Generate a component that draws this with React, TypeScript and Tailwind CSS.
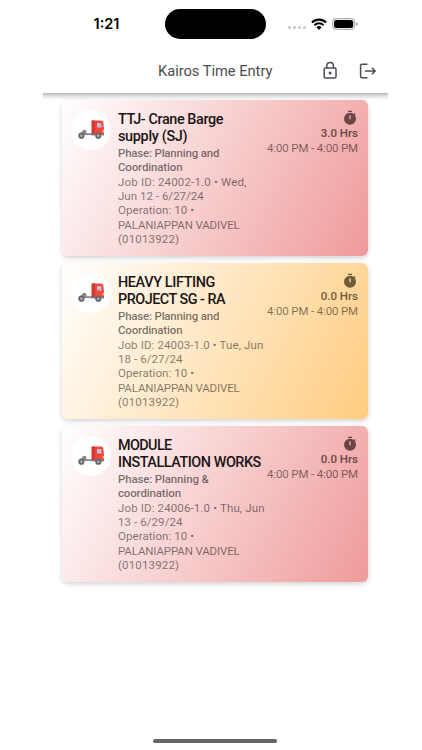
import React from 'react';

type Line = { text: string; track: string };
type Job = { tone: string; title: Line[]; phase: Line[]; details: Line[]; hours: string; ink: string };

const operation: Line[] = [
  { text: 'Operation: 10 •', track: 'tracking-[0.07px]' },
  { text: 'PALANIAPPAN VADIVEL', track: 'tracking-[-0.13px]' },
  { text: '(01013922)', track: 'tracking-[0.15px]' },
];

const red = 'bg-[linear-gradient(117deg,#ffffff_0%,#ef9a9a_100%)]';
const orange = 'bg-[linear-gradient(117deg,#ffffff_0%,#ffcc80_100%)]';

const jobs: Job[] = [
  {
    tone: red,
    ink: 'text-[#6a4545]',
    title: [
      { text: 'TTJ- Crane Barge', track: 'tracking-[-0.4px]' },
      { text: 'supply (SJ)', track: 'tracking-[-0.3px]' },
    ],
    phase: [
      { text: 'Phase: Planning and', track: 'tracking-[-0.2px]' },
      { text: 'Coordination', track: 'tracking-[-0.15px]' },
    ],
    details: [
      { text: 'Job ID: 24002-1.0 • Wed,', track: 'tracking-[0.17px]' },
      { text: 'Jun 12 - 6/27/24', track: 'tracking-[0.02px]' },
      ...operation,
    ],
    hours: '3.0 Hrs',
  },
  {
    tone: orange,
    ink: 'text-[#705a39]',
    title: [
      { text: 'HEAVY LIFTING', track: 'tracking-[-0.36px]' },
      { text: 'PROJECT SG - RA', track: 'tracking-[-0.5px]' },
    ],
    phase: [
      { text: 'Phase: Planning and', track: 'tracking-[-0.2px]' },
      { text: 'Coordination', track: 'tracking-[-0.15px]' },
    ],
    details: [
      { text: 'Job ID: 24003-1.0 • Tue, Jun', track: 'tracking-[0.11px]' },
      { text: '18 - 6/27/24', track: 'tracking-[0.08px]' },
      ...operation,
    ],
    hours: '0.0 Hrs',
  },
  {
    tone: red,
    ink: 'text-[#6a4545]',
    title: [
      { text: 'MODULE', track: 'tracking-[-0.6px]' },
      { text: 'INSTALLATION WORKS', track: 'tracking-[-0.45px]' },
    ],
    phase: [
      { text: 'Phase: Planning &', track: 'tracking-[-0.15px]' },
      { text: 'coordination', track: 'tracking-[-0.15px]' },
    ],
    details: [
      { text: 'Job ID: 24006-1.0 • Thu, Jun', track: 'tracking-[0.13px]' },
      { text: '13 - 6/29/24', track: 'tracking-[0.08px]' },
      ...operation,
    ],
    hours: '0.0 Hrs',
  },
];

function Truck() {
  return (
    <svg viewBox="0 0 28 20" className="h-5 w-7">
      <path d="M2 14 4.5 12.6 6 10h3l.5 3.2H15v1.8H2z" fill="#85878c" />
      <path d="M15 .5h9q2 0 2.3 2l.7 7v5H15z" fill="#f4473b" />
      <path d="M14.5.5H18v13.5h-3.5z" fill="#d93632" />
      <path d="M20 3h4.2l.7 4.5H20z" fill="#b9bfd8" />
      <path d="M14 13.6h13v1.8H14z" fill="#77797d" />
      <path d="M25.5 10h1.6v2.5h-1.6z" fill="#ffb45c" />
      <circle cx="4.4" cy="15.7" r="3.1" fill="#65676b" />
      <circle cx="4.4" cy="15.7" r="1.2" fill="#b4b5b8" />
      <circle cx="21.3" cy="15.7" r="3.1" fill="#65676b" />
      <circle cx="21.3" cy="15.7" r="1.2" fill="#b4b5b8" />
    </svg>
  );
}

function Timer() {
  return (
    <svg viewBox="0 0 24 24" className="size-4" fill="currentColor">
      <path d="M9 1h6v2H9zM19.03 7.39l1.42-1.42c-.43-.51-.9-.99-1.41-1.41l-1.42 1.42A8.96 8.96 0 0 0 12 4a9 9 0 1 0 9 9c0-2.12-.74-4.07-1.97-5.61zM13 14h-2V8h2z" fillRule="evenodd" />
    </svg>
  );
}

function Lines({ lines, className }: { lines: Line[]; className: string }) {
  return (
    <div className={className}>
      {lines.map((line) => (
        <div key={line.text} className={line.track}>{line.text}</div>
      ))}
    </div>
  );
}

function JobCard({ job }: { job: Job }) {
  return (
    <article className={`flex h-[156px] rounded-[6px] pl-[9px] pr-[10px] pt-[10px] shadow-[0_2px_5px_rgba(0,0,0,0.18)] ${job.tone}`}>
      <div className="flex size-10 shrink-0 items-center justify-center rounded-full bg-white">
        <Truck />
      </div>
      <div className="ml-[7px] w-[140px] whitespace-nowrap pt-[0.6px]">
        <Lines lines={job.title} className="text-[14.4px] leading-[17.5px] font-medium text-[#1b1414]" />
        <Lines lines={job.phase} className="text-[11.5px] leading-[14.45px] font-medium text-black/55" />
        <Lines lines={job.details} className="text-[11.5px] leading-[14.45px] text-black/50" />
      </div>
      <div className={`flex flex-1 flex-col items-end whitespace-nowrap text-[11.5px] leading-[14.5px] ${job.ink}`}>
        <Timer />
        <div className="font-medium">{job.hours}</div>
        <div className="tracking-[-0.15px] text-black/50">4:00 PM - 4:00 PM</div>
      </div>
    </article>
  );
}

export default function App() {
  return (
    <div className="flex h-[750px] w-[422px] flex-col items-center overflow-hidden bg-white font-[Roboto,sans-serif]">
      <header className="ml-[8px] h-[93px] w-[345px] shrink-0 bg-white">
        <div className="flex h-12 items-center">
          <span className="ml-[51px] w-[71px] font-['Inter',sans-serif] text-[14.5px] font-semibold text-black">1:21</span>
          <div className="h-[30px] w-[101px] rounded-full bg-black" />
          <div className="ml-[22px] mt-[7px] flex gap-[2px]">
            <i className="size-[3px] rounded-full bg-[#c8c8c8]" />
            <i className="size-[3px] rounded-full bg-[#c8c8c8]" />
            <i className="size-[3px] rounded-full bg-[#c8c8c8]" />
            <i className="size-[3px] rounded-full bg-[#c8c8c8]" />
          </div>
          <svg viewBox="0 0 16 12" className="ml-[5px] h-3 w-4" fill="none" stroke="#000" strokeWidth="2.1">
            <path d="M.9 4.5a10.2 10.2 0 0 1 14.2 0M3.4 7.2a6.5 6.5 0 0 1 9.2 0" />
            <path d="M5.4 9.2a3.8 3.8 0 0 1 5.2 0L8 11.9z" fill="#000" stroke="none" />
          </svg>
          <svg viewBox="0 0 26 12" className="ml-[5px] h-3 w-[26px]">
            <rect x=".6" y=".6" width="22" height="10.8" rx="3.6" fill="none" stroke="#aaa" strokeWidth="1.1" />
            <rect x="2" y="2" width="19.2" height="8" rx="2.3" fill="#000" />
            <path d="M24 4q1.8.5 1.8 2T24 8z" fill="#aaa" />
          </svg>
        </div>
        <div className="flex h-[45px] items-center text-[#4b4e55]">
          <h1 className="ml-[115.5px] w-[161.5px] whitespace-nowrap text-[14.7px] leading-5 tracking-[-0.03px]">Kairos Time Entry</h1>
          <svg viewBox="0 0 20 20" className="size-5" fill="none" stroke="currentColor" strokeWidth="1.5">
            <rect x="4.2" y="7" width="11.8" height="10" rx="1.2" />
            <path d="M6.8 7V4.7a3.3 3.3 0 0 1 6.6 0V7" />
            <circle cx="10.1" cy="12" r="1.5" fill="currentColor" stroke="none" />
          </svg>
          <svg viewBox="0 0 20 20" className="ml-[18px] size-5" fill="none" stroke="currentColor" strokeWidth="1.5">
            <path d="M9.5 3.2H4q-1.4 0-1.4 1.4v10.8q0 1.4 1.4 1.4h5.5M7 10h10M13.8 6.7 17.2 10l-3.4 3.3" />
          </svg>
        </div>
      </header>
      <div className="ml-[8px] h-[7px] w-[345px] shrink-0 bg-[linear-gradient(to_bottom,#b4b6b6,#dcdddd_40%,#f8f8f8_85%,#ffffff)]" />
      <main className="ml-[8px] flex w-[306px] flex-col gap-[7px]">
        {jobs.map((job, i) => (
          <JobCard key={i} job={job} />
        ))}
      </main>
      <div className="mb-[7px] ml-[8px] mt-auto h-1 w-[124px] shrink-0 rounded-full bg-[#666]" />
    </div>
  );
}
